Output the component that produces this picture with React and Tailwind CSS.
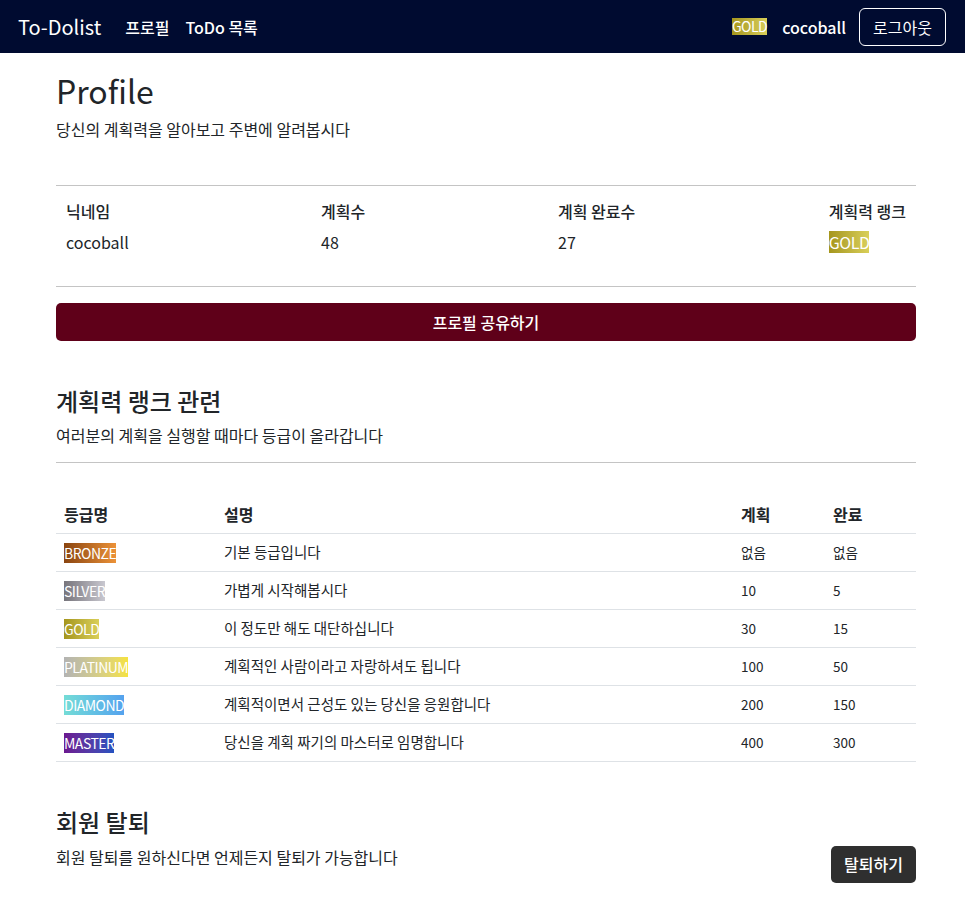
import React from "react";

const ranks = [
  { name: "BRONZE", color: "bg-gradient-to-r from-[#8a4510] to-[#ec9238]", desc: "기본 등급입니다", plan: "없음", done: "없음" },
  { name: "SILVER", color: "bg-gradient-to-r from-[#77757c] to-[#c9c8d0]", desc: "가볍게 시작해봅시다", plan: "10", done: "5" },
  { name: "GOLD", color: "bg-gradient-to-r from-[#a5961c] to-[#d9cf58]", desc: "이 정도만 해도 대단하십니다", plan: "30", done: "15" },
  { name: "PLATINUM", color: "bg-gradient-to-r from-[#b3b3b3] to-[#f5e23c]", desc: "계획적인 사람이라고 자랑하셔도 됩니다", plan: "100", done: "50" },
  { name: "DIAMOND", color: "bg-gradient-to-r from-[#74dcd6] to-[#55a2ee]", desc: "계획적이면서 근성도 있는 당신을 응원합니다", plan: "200", done: "150" },
  { name: "MASTER", color: "bg-gradient-to-r from-[#6b1790] to-[#2252c0]", desc: "당신을 계획 짜기의 마스터로 임명합니다", plan: "400", done: "300" },
];

function Badge({ name, color, size = "text-[14px]" }) {
  return (
    <span className={`inline-block ${color} ${size} leading-[20px] text-white tracking-[-0.5px]`}>
      {name}
    </span>
  );
}

export default function App() {
  return (
    <div className="min-h-screen bg-white text-[#212529] font-['Noto_Sans_CJK_KR','Noto_Sans',sans-serif]">
      {/* Navbar */}
      <nav className="h-[53px] bg-[#000b30] flex items-center justify-between pl-[18px] pr-[19px]">
        <div className="flex items-center">
          <span className="text-[20px] text-white mr-[24px]">To-Dolist</span>
          <a className="text-[16px] text-white font-medium mr-[16px]">프로필</a>
          <a className="text-[16px] text-white font-medium">ToDo 목록</a>
        </div>
        <div className="flex items-center">
          <span className="inline-block bg-gradient-to-r from-[#a5961c] to-[#d9cf58] text-white text-[14px] leading-[17px] tracking-[-0.5px] mr-[15px]">
            GOLD
          </span>
          <span className="text-[16px] text-white font-medium mr-[13px]">cocoball</span>
          <button className="h-[38px] px-[13px] border border-white rounded-md text-white text-[16px]">
            로그아웃
          </button>
        </div>
      </nav>

      <main className="w-[860px] ml-[56px]">
        {/* Profile header */}
        <h1 className="text-[32px] leading-[40px] mt-[17px]">Profile</h1>
        <p className="text-[16px] mt-[7px]">당신의 계획력을 알아보고 주변에 알려봅시다</p>

        <div className="mt-[44px] border-t border-[#c4c4c4]" />
        <div className="flex justify-between px-[10px] pt-[13px] pb-[32px]">
          <div className="w-[255px]">
            <div className="text-[16px] font-medium">닉네임</div>
            <div className="text-[16px] mt-[7px]">cocoball</div>
          </div>
          <div className="w-[237px]">
            <div className="text-[16px] font-medium">계획수</div>
            <div className="text-[16px] mt-[7px]">48</div>
          </div>
          <div className="flex-1">
            <div className="text-[16px] font-medium">계획 완료수</div>
            <div className="text-[16px] mt-[7px]">27</div>
          </div>
          <div>
            <div className="text-[16px] font-medium">계획력 랭크</div>
            <div className="mt-[7px]">
              <Badge name="GOLD" color="bg-gradient-to-r from-[#a5961c] to-[#d9cf58]" size="text-[16px] leading-[22px]" />
            </div>
          </div>
        </div>
        <div className="border-t border-[#c4c4c4]" />

        <button className="mt-[16px] w-full h-[38px] rounded-[5px] bg-[#5f0019] text-white text-[16px] font-medium">
          프로필 공유하기
        </button>

        {/* Rank section */}
        <h2 className="text-[24px] leading-[30px] font-medium mt-[45px]">계획력 랭크 관련</h2>
        <p className="text-[16px] mt-[7px]">여러분의 계획을 실행할 때마다 등급이 올라갑니다</p>
        <div className="mt-[15px] border-t border-[#c4c4c4]" />

        <table className="w-full mt-[38px] border-collapse">
          <thead>
            <tr className="border-b border-[#dee2e6] text-left">
              <th className="pl-[8px] w-[168px] h-[32px] text-[16px] font-bold align-top pt-[1px]">등급명</th>
              <th className="text-[16px] font-bold align-top pt-[1px]">설명</th>
              <th className="w-[92px] text-[16px] font-bold align-top pt-[1px]">계획</th>
              <th className="w-[83px] text-[16px] font-bold align-top pt-[1px]">완료</th>
            </tr>
          </thead>
          <tbody>
            {ranks.map((r) => (
              <tr key={r.name} className="border-b border-[#dee2e6] h-[38px]">
                <td className="pl-[8px]">
                  <Badge name={r.name} color={r.color} size="text-[14px]" />
                </td>
                <td className="text-[14.5px]">{r.desc}</td>
                <td className="text-[13.5px]">{r.plan}</td>
                <td className="text-[13.5px]">{r.done}</td>
              </tr>
            ))}
          </tbody>
        </table>

        {/* Withdraw section */}
        <h2 className="text-[24px] leading-[30px] font-medium mt-[45px]">회원 탈퇴</h2>
        <div className="mt-[-6px] flex items-center justify-between">
          <p className="text-[16px]">회원 탈퇴를 원하신다면 언제든지 탈퇴가 가능합니다</p>
          <button className="mt-[15px] h-[37px] px-[13px] rounded-[5px] bg-[#2f2f2f] text-white text-[16px] font-medium">
            탈퇴하기
          </button>
        </div>
      </main>
    </div>
  );
}
